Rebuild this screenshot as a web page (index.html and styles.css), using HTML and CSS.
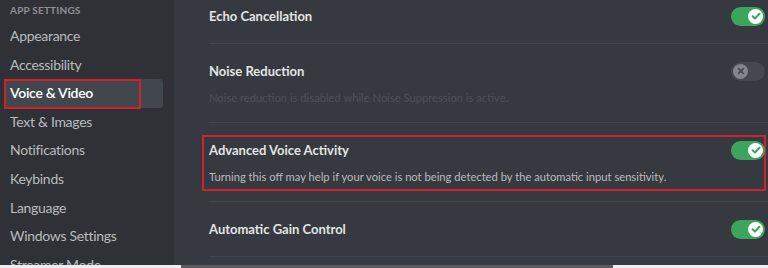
FILE: index.html
```html
<!DOCTYPE html>
<html>
<head>
<meta charset="utf-8">
<link rel="stylesheet" href="styles.css">
</head>
<body>
<div class="app">
  <div class="frame">
    <nav class="sidebar">
      <div class="nav-header">App Settings</div>
      <div class="nav-item">Appearance</div>
      <div class="nav-item">Accessibility</div>
      <div class="nav-item selected">Voice &amp; Video<span class="mark mark-nav"></span></div>
      <div class="nav-item">Text &amp; Images</div>
      <div class="nav-item">Notifications</div>
      <div class="nav-item">Keybinds</div>
      <div class="nav-item">Language</div>
      <div class="nav-item">Windows Settings</div>
      <div class="nav-item">Streamer Mode</div>
    </nav>
    <main class="content">
      <section class="row first">
        <div class="row-head">
          <div class="title">Echo Cancellation</div>
          <div class="toggle on"><span class="knob"><svg viewBox="0 0 14 14" width="14" height="14"><path d="M3.6 7.2 L6 9.5 L10.4 4.8" fill="none" stroke="#3ba55c" stroke-width="2" stroke-linecap="round" stroke-linejoin="round"/></svg></span></div>
        </div>
      </section>
      <section class="row with-desc">
        <div class="row-head">
          <div class="title">Noise Reduction</div>
          <div class="toggle off"><span class="knob"><svg viewBox="0 0 14 14" width="14" height="14"><path d="M4.6 4.6 L9.4 9.4 M9.4 4.6 L4.6 9.4" fill="none" stroke="#4a4d53" stroke-width="1.8" stroke-linecap="round"/></svg></span></div>
        </div>
        <div class="desc disabled">Noise reduction is disabled while Noise Suppression is active.</div>
      </section>
      <section class="row with-desc">
        <span class="mark mark-row"></span>
        <div class="row-head">
          <div class="title">Advanced Voice Activity</div>
          <div class="toggle on"><span class="knob"><svg viewBox="0 0 14 14" width="14" height="14"><path d="M3.6 7.2 L6 9.5 L10.4 4.8" fill="none" stroke="#3ba55c" stroke-width="2" stroke-linecap="round" stroke-linejoin="round"/></svg></span></div>
        </div>
        <div class="desc">Turning this off may help if your voice is not being detected by the automatic input sensitivity.</div>
      </section>
      <section class="row">
        <div class="row-head">
          <div class="title">Automatic Gain Control</div>
          <div class="toggle on"><span class="knob"><svg viewBox="0 0 14 14" width="14" height="14"><path d="M3.6 7.2 L6 9.5 L10.4 4.8" fill="none" stroke="#3ba55c" stroke-width="2" stroke-linecap="round" stroke-linejoin="round"/></svg></span></div>
        </div>
      </section>
    </main>
  </div>
  <div class="crop-edge">
    <span class="edge-light left"></span>
    <span class="edge-dark"></span>
    <span class="edge-light right"></span>
  </div>
</div>
</body>
</html>
```
FILE: styles.css
```css
* { box-sizing: border-box; }
html, body { margin: 0; padding: 0; }
body {
  width: 768px;
  height: 268px;
  overflow: hidden;
  background: #36393f;
  font-family: Lato, "Noto Sans", sans-serif;
}
.app {
  display: flex;
  flex-direction: column;
  height: 268px;
}
.frame {
  display: flex;
  height: 265px;
  overflow: hidden;
}
.sidebar {
  width: 174px;
  flex: none;
  background: #2f3136;
  padding-top: 3px;
}
.nav-header {
  height: 14px;
  line-height: 14px;
  padding-left: 10px;
  margin-bottom: 5px;
  font-size: 10px;
  font-weight: 700;
  text-transform: uppercase;
  color: #8e9297;
  letter-spacing: 0.2px;
}
.nav-item {
  position: relative;
  height: 28.6px;
  line-height: 28.6px;
  margin: 0 11px 0 4px;
  padding-left: 6px;
  border-radius: 4px;
  font-size: 14px;
  letter-spacing: -0.3px;
  color: #b9bbbe;
  white-space: nowrap;
}
.nav-item.selected {
  background: #42464d;
  color: #ffffff;
  font-weight: 600;
}
.mark {
  position: absolute;
  border: 2px solid #d0212c;
  pointer-events: none;
}
.mark-nav {
  left: 0;
  top: 0;
  width: 137px;
  height: 30px;
}
.content {
  flex: 1;
  padding-left: 35px;
}
.row {
  position: relative;
  padding: 17px 3px 17px 0;
  border-bottom: 1px solid #42454b;
}
.row.first { padding-top: 6px; }
.row.with-desc { padding-bottom: 15px; }
.row-head {
  display: flex;
  align-items: center;
  justify-content: space-between;
  height: 20px;
}
.title {
  font-size: 13px;
  font-weight: 700;
  color: #e3e4e6;
}
.desc {
  margin-top: 8px;
  height: 18px;
  line-height: 18px;
  font-size: 11.2px;
  color: #b9bbbe;
}
.desc.disabled { color: #4d5057; }
.mark-row {
  left: -7px;
  right: 2px;
  top: 12px;
  bottom: 10px;
}
.toggle {
  position: relative;
  width: 34px;
  height: 19px;
  border-radius: 10px;
  display: flex;
  align-items: center;
  padding: 0 2px;
}
.toggle.on {
  background: #3ba55c;
  justify-content: flex-end;
}
.toggle.off {
  background: #45484e;
  justify-content: flex-start;
}
.knob {
  width: 15px;
  height: 15px;
  border-radius: 50%;
  display: flex;
  align-items: center;
  justify-content: center;
}
.toggle.on .knob { background: #ffffff; }
.toggle.off .knob { background: #83868c; }
.crop-edge {
  display: flex;
  height: 3px;
}
.edge-light { background: #eeeef0; }
.edge-light.left { width: 181px; }
.edge-light.right { width: 155px; }
.edge-dark { flex: 1; background: #5a5c62; }
```
